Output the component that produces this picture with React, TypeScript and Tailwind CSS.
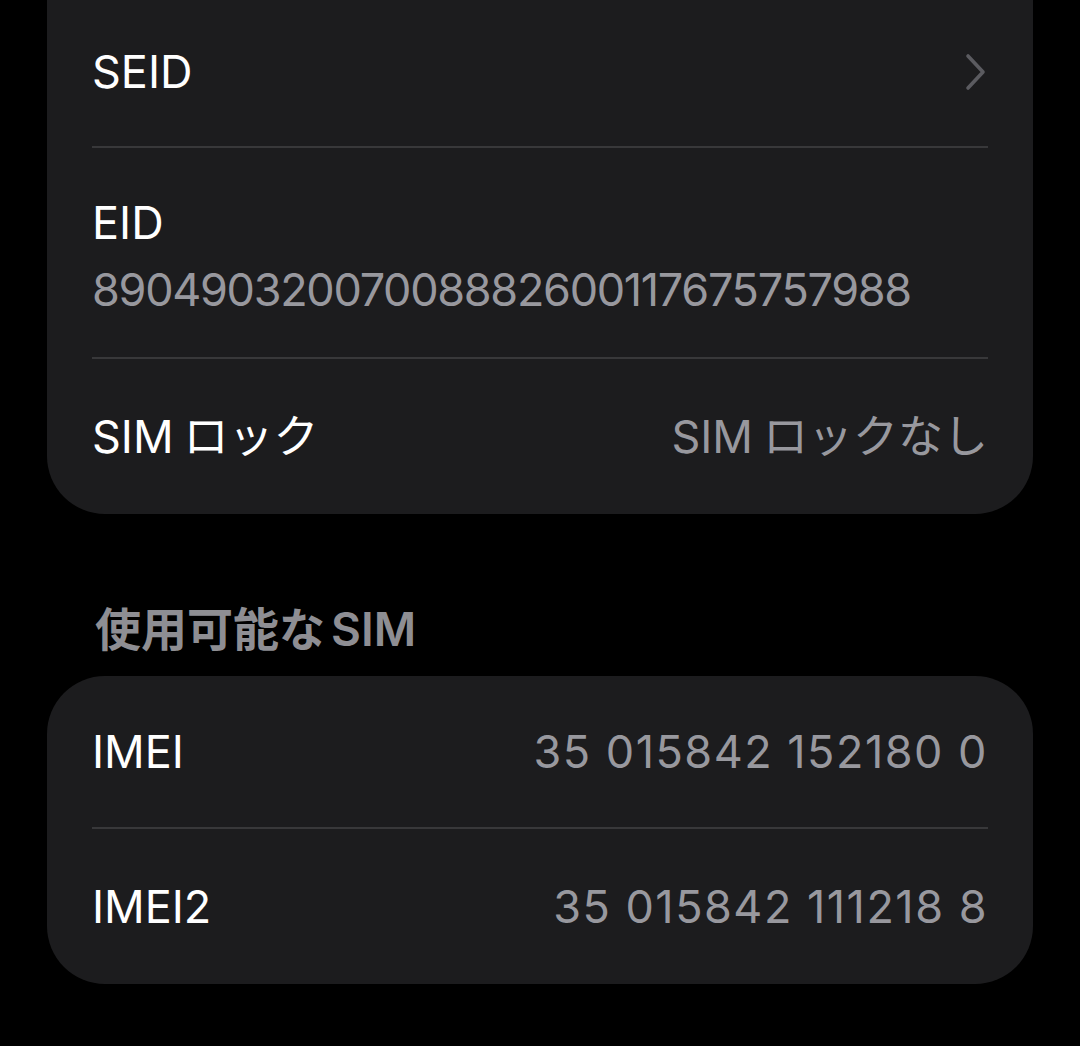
import React from "react";

const font = { fontFamily: 'Inter, "Noto Sans CJK JP", sans-serif' };

function Chevron() {
  return (
    <svg width="24" height="38" viewBox="0 0 24 38" fill="none">
      <polyline points="4,3 19,19 4,35" stroke="#5b5b60" strokeWidth="3.6" strokeLinecap="round" strokeLinejoin="round" />
    </svg>
  );
}

export default function App() {
  return (
    <div className="min-h-[1046px] w-[1080px] bg-black px-[47px] text-white overflow-hidden" style={font}>
      <div className="bg-[#1c1c1e] rounded-b-[58px] px-[45px]">
        <div className="h-[146px] pb-[3px] flex items-center justify-between">
          <span className="text-[45px] leading-none">SEID</span>
          <Chevron />
        </div>
        <div className="h-[2px] bg-[#38383a]" />
        <div className="pt-[52px] pb-[45px] flex flex-col gap-[22px]">
          <span className="text-[45px] leading-none">EID</span>
          <span className="text-[45px] leading-none text-[#98989e] tracking-[-1.3px]">
            89049032007008882600117675757988
          </span>
        </div>
        <div className="h-[2px] bg-[#38383a]" />
        <div className="h-[155px] flex items-center justify-between">
          <span className="text-[45px] leading-none">
            <span className="mr-[10px]">SIM</span>ロック
          </span>
          <span className="text-[45px] leading-none text-[#98989e]">
            <span className="mr-[10px]">SIM</span>ロックなし
          </span>
        </div>
      </div>
      <div className="pt-[92px] pb-[24px] px-[48px]">
        <div className="text-[46px] leading-none font-semibold text-[#8e8e93]">
          使用可能な<span className="ml-[6px]">SIM</span>
        </div>
      </div>
      <div className="bg-[#1c1c1e] rounded-[58px] px-[45px]">
        <div className="h-[151px] flex items-center justify-between">
          <span className="text-[45px] leading-none">IMEI</span>
          <span className="text-[45px] leading-none text-[#98989e] tracking-[1.5px]">
            35 015842 152180 0
          </span>
        </div>
        <div className="h-[2px] bg-[#38383a]" />
        <div className="h-[155px] flex items-center justify-between">
          <span className="text-[45px] leading-none">IMEI2</span>
          <span className="text-[45px] leading-none text-[#98989e] tracking-[1.5px]">
            35 015842 111218 8
          </span>
        </div>
      </div>
    </div>
  );
}
